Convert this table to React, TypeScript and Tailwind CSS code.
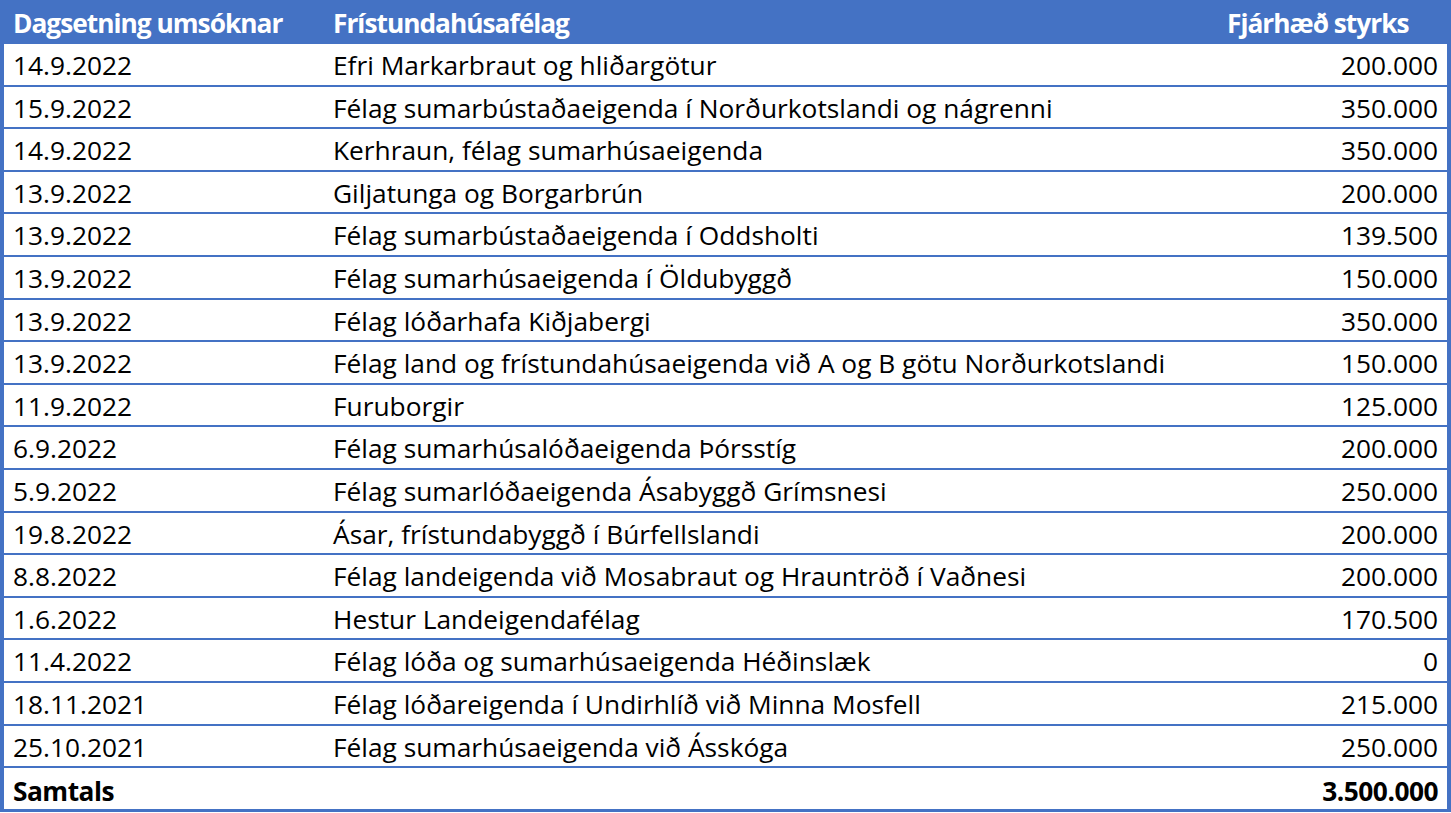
import React from "react";

const ROWS: [string, string, string][] = [
  ["14.9.2022", "Efri Markarbraut og hliðargötur", "200.000"],
  ["15.9.2022", "Félag sumarbústaðaeigenda í Norðurkotslandi og nágrenni", "350.000"],
  ["14.9.2022", "Kerhraun, félag sumarhúsaeigenda", "350.000"],
  ["13.9.2022", "Giljatunga og Borgarbrún", "200.000"],
  ["13.9.2022", "Félag sumarbústaðaeigenda í Oddsholti", "139.500"],
  ["13.9.2022", "Félag sumarhúsaeigenda í Öldubyggð", "150.000"],
  ["13.9.2022", "Félag lóðarhafa Kiðjabergi", "350.000"],
  ["13.9.2022", "Félag land og frístundahúsaeigenda við A og B götu Norðurkotslandi", "150.000"],
  ["11.9.2022", "Furuborgir", "125.000"],
  ["6.9.2022", "Félag sumarhúsalóðaeigenda Þórsstíg", "200.000"],
  ["5.9.2022", "Félag sumarlóðaeigenda Ásabyggð Grímsnesi", "250.000"],
  ["19.8.2022", "Ásar, frístundabyggð í Búrfellslandi", "200.000"],
  ["8.8.2022", "Félag landeigenda við Mosabraut og Hrauntröð í Vaðnesi", "200.000"],
  ["1.6.2022", "Hestur Landeigendafélag", "170.500"],
  ["11.4.2022", "Félag lóða og sumarhúsaeigenda Héðinslæk", "0"],
  ["18.11.2021", "Félag lóðareigenda í Undirhlíð við Minna Mosfell", "215.000"],
  ["25.10.2021", "Félag sumarhúsaeigenda við Ásskóga", "250.000"],
];

export default function App() {
  return (
    <div className="bg-white w-[1451px] h-[813px] overflow-hidden font-['Open_Sans',sans-serif] text-[26.3px] text-black">
      <div className="border-x-4 border-b-[3px] border-[#4472C4]">
        {/* Header */}
        <div className="grid grid-cols-[320px_1fr_229px] h-[44px] items-center bg-[#4472C4] text-white font-bold tracking-[-1px] pt-1">
          <div className="pl-[9px]">Dagsetning umsóknar</div>
          <div className="pl-[9px]">Frístundahúsafélag</div>
          <div className="pl-[9px]">Fjárhæð styrks</div>
        </div>

        {ROWS.map((r, i) => (
          <div
            key={i}
            className="grid grid-cols-[320px_1fr_229px] h-[42.6px] items-center border-b-2 border-[#4472C4] pt-[2px]"
          >
            <div className="pl-[9px]">{r[0]}</div>
            <div className="pl-[9px] whitespace-nowrap">{r[1]}</div>
            <div className="pr-[9px] text-right">{r[2]}</div>
          </div>
        ))}

        {/* Total */}
        <div className="grid grid-cols-[320px_1fr_229px] h-[41px] items-center font-bold tracking-[-0.5px] pt-[4px]">
          <div className="pl-[9px]">Samtals</div>
          <div />
          <div className="pr-[9px] text-right">3.500.000</div>
        </div>
      </div>
    </div>
  );
}
